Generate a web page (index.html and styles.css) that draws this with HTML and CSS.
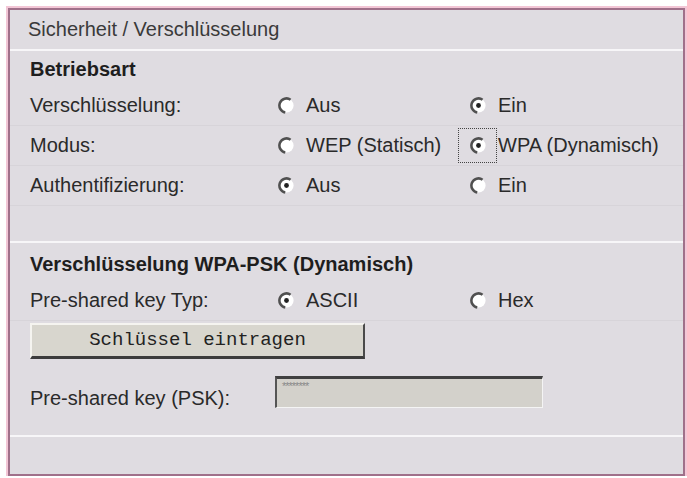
FILE: index.html
```html
<!DOCTYPE html>
<html>
<head>
<meta charset="utf-8">
<link rel="stylesheet" href="styles.css">
</head>
<body>
<div class="panel">
  <div class="header">Sicherheit / Verschlüsselung</div>

  <div class="section s1">
    <div class="title t1">Betriebsart</div>
    <div class="row">
      <div class="label">Verschlüsselung:</div>
      <div class="opt"><svg class="radio" viewBox="0 0 12 12"><circle cx="6" cy="6" r="5" fill="#fff"/><path d="M8.87 1.9 A5 5 0 1 0 5.13 10.92" fill="none" stroke="#505050" stroke-width="1.8"/></svg><span>Aus</span></div>
      <div class="opt"><svg class="radio" viewBox="0 0 12 12"><circle cx="6" cy="6" r="5" fill="#fff"/><path d="M8.87 1.9 A5 5 0 1 0 5.13 10.92" fill="none" stroke="#505050" stroke-width="1.8"/><circle cx="6" cy="6" r="1.7" fill="#222"/></svg><span>Ein</span></div>
    </div>
    <div class="row">
      <div class="label">Modus:</div>
      <div class="opt"><svg class="radio" viewBox="0 0 12 12"><circle cx="6" cy="6" r="5" fill="#fff"/><path d="M8.87 1.9 A5 5 0 1 0 5.13 10.92" fill="none" stroke="#505050" stroke-width="1.8"/></svg><span>WEP (Statisch)</span></div>
      <div class="opt"><span class="focus"><svg class="radio" viewBox="0 0 12 12"><circle cx="6" cy="6" r="5" fill="#fff"/><path d="M8.87 1.9 A5 5 0 1 0 5.13 10.92" fill="none" stroke="#505050" stroke-width="1.8"/><circle cx="6" cy="6" r="1.7" fill="#222"/></svg></span><span>WPA (Dynamisch)</span></div>
    </div>
    <div class="row">
      <div class="label">Authentifizierung:</div>
      <div class="opt"><svg class="radio" viewBox="0 0 12 12"><circle cx="6" cy="6" r="5" fill="#fff"/><path d="M8.87 1.9 A5 5 0 1 0 5.13 10.92" fill="none" stroke="#505050" stroke-width="1.8"/><circle cx="6" cy="6" r="1.7" fill="#222"/></svg><span>Aus</span></div>
      <div class="opt"><svg class="radio" viewBox="0 0 12 12"><circle cx="6" cy="6" r="5" fill="#fff"/><path d="M8.87 1.9 A5 5 0 1 0 5.13 10.92" fill="none" stroke="#505050" stroke-width="1.8"/></svg><span>Ein</span></div>
    </div>
    <div class="spacer1"></div>
  </div>

  <div class="section s2">
    <div class="title t2">Verschlüsselung WPA-PSK (Dynamisch)</div>
    <div class="row row2">
      <div class="label">Pre-shared key Typ:</div>
      <div class="opt"><svg class="radio" viewBox="0 0 12 12"><circle cx="6" cy="6" r="5" fill="#fff"/><path d="M8.87 1.9 A5 5 0 1 0 5.13 10.92" fill="none" stroke="#505050" stroke-width="1.8"/><circle cx="6" cy="6" r="1.7" fill="#222"/></svg><span>ASCII</span></div>
      <div class="opt"><svg class="radio" viewBox="0 0 12 12"><circle cx="6" cy="6" r="5" fill="#fff"/><path d="M8.87 1.9 A5 5 0 1 0 5.13 10.92" fill="none" stroke="#505050" stroke-width="1.8"/></svg><span>Hex</span></div>
    </div>
    <div class="btnrow"><div class="button">Schlüssel eintragen</div></div>
    <div class="pskrow">
      <div class="label psklabel">Pre-shared key (PSK):</div>
      <div class="input">********</div>
    </div>
    <div class="spacer2"></div>
  </div>
  <div class="footer"></div>
</div>
</body>
</html>
```

FILE: styles.css
```css
html, body {
  margin: 0;
  padding: 0;
  background: #ffffff;
}
body {
  font-family: "Liberation Sans", Arial, sans-serif;
  font-size: 20px;
  color: #2a2a2a;
}
.panel {
  margin: 8px 0 0 8px;
  width: 673px;
  height: 464px;
  border: 2px solid #a0708a;
  box-shadow: 0 0 0 2px #f3c6d6;
  background: #dfdce1;
  display: flex;
  flex-direction: column;
}
.header {
  height: 39px;
  line-height: 39px;
  padding-left: 18px;
  color: #3a3a3a;
  border-bottom: 2px solid #f7f6f8;
}
.section {
  display: flex;
  flex-direction: column;
  border-bottom: 2px solid #f7f6f8;
}
.title {
  font-weight: bold;
  padding-left: 20px;
  color: #1e1e1e;
}
.t1 {
  height: 35px;
  line-height: 37px;
}
.t2 {
  height: 38px;
  line-height: 42px;
}
.row {
  display: flex;
  align-items: center;
  height: 39px;
  border-bottom: 1px solid #d7d4d9;
}
.label {
  width: 248px;
  padding-left: 20px;
  flex: none;
}
.opt {
  width: 192px;
  display: flex;
  align-items: center;
  flex: none;
}
.radio {
  width: 17px;
  height: 17px;
  margin-right: 11px;
  flex: none;
}
.focus {
  display: flex;
  padding: 8px 9px 8px 11px;
  margin: -9px 1px -9px -12px;
  border: 1px dotted #444;
}
.focus .radio {
  margin-right: 0;
}
.spacer1 {
  height: 35px;
}
.btnrow {
  height: 37px;
  padding: 2px 0 0 20px;
  display: flex;
}
.button {
  width: 331px;
  height: 31px;
  background: #d8d6ce;
  border-top: 2px solid #f5f4f0;
  border-left: 2px solid #f5f4f0;
  border-right: 2px solid #4a4a4a;
  border-bottom: 3px solid #3c3c3c;
  font-family: "Liberation Mono", "Courier New", monospace;
  font-size: 19px;
  line-height: 31px;
  text-align: center;
  color: #222;
  box-sizing: content-box;
}
.pskrow {
  display: flex;
  align-items: flex-start;
  margin-top: 16px;
  height: 32px;
}
.psklabel {
  width: 245px;
  padding-top: 11px;
}
.input {
  width: 268px;
  height: 32px;
  background: #d3d1cb;
  border-top: 3px solid #404040;
  border-left: 2px solid #555;
  border-right: 1px solid #f4f4f4;
  border-bottom: 1px solid #f4f4f4;
  font-size: 11px;
  line-height: 14px;
  padding-left: 5px;
  color: #8a8a8a;
  letter-spacing: -1px;
  box-sizing: border-box;
}
.spacer2 {
  height: 27px;
}
.footer {
  flex: 1;
}
```
